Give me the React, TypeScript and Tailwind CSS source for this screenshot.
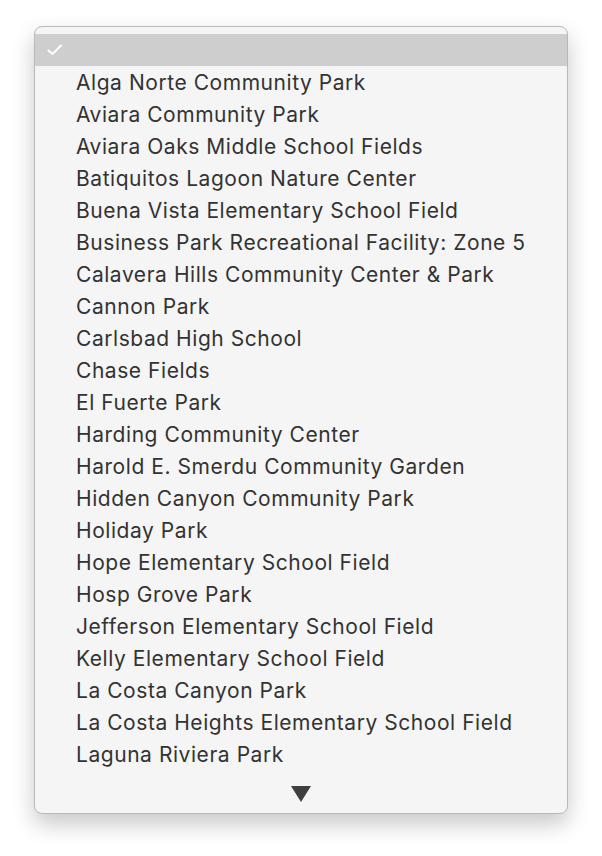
const parks = [
  "Alga Norte Community Park",
  "Aviara Community Park",
  "Aviara Oaks Middle School Fields",
  "Batiquitos Lagoon Nature Center",
  "Buena Vista Elementary School Field",
  "Business Park Recreational Facility: Zone 5",
  "Calavera Hills Community Center & Park",
  "Cannon Park",
  "Carlsbad High School",
  "Chase Fields",
  "El Fuerte Park",
  "Harding Community Center",
  "Harold E. Smerdu Community Garden",
  "Hidden Canyon Community Park",
  "Holiday Park",
  "Hope Elementary School Field",
  "Hosp Grove Park",
  "Jefferson Elementary School Field",
  "Kelly Elementary School Field",
  "La Costa Canyon Park",
  "La Costa Heights Elementary School Field",
  "Laguna Riviera Park",
]

export default function App() {
  return (
    <div className="w-[602px] h-[856px] bg-white pt-[26px] pl-[34px]">
      <div
        className="w-[534px] h-[788px] rounded-[8px] bg-[#f5f5f5] border border-[#b9b9b9] shadow-[0_10px_22px_rgba(0,0,0,0.22)] overflow-hidden flex flex-col pt-[7px]"
        style={{ fontFamily: "Inter, 'Liberation Sans', sans-serif" }}
      >
        {/* selected (empty) row */}
        <div className="h-[32px] bg-[#cecece] flex items-center pl-[12px] shrink-0">
          <svg width="16" height="12" viewBox="0 0 16 12" fill="none">
            <path d="M1.5 6.5 L5.5 10 L14 1.5" stroke="#ffffff" strokeWidth="2" strokeLinecap="round" strokeLinejoin="round" />
          </svg>
        </div>

        {parks.map((p) => (
          <div key={p} className="h-[32px] flex items-center pl-[41px] pt-[1px] text-[21px] tracking-[0.55px] text-[#333333] shrink-0 whitespace-nowrap">
            {p}
          </div>
        ))}

        <div className="flex justify-center pt-[16px]">
          <svg width="20" height="16" viewBox="0 0 20 16">
            <path d="M0 0 H20 L10 16 Z" fill="#3f3f3f" />
          </svg>
        </div>
      </div>
    </div>
  )
}
